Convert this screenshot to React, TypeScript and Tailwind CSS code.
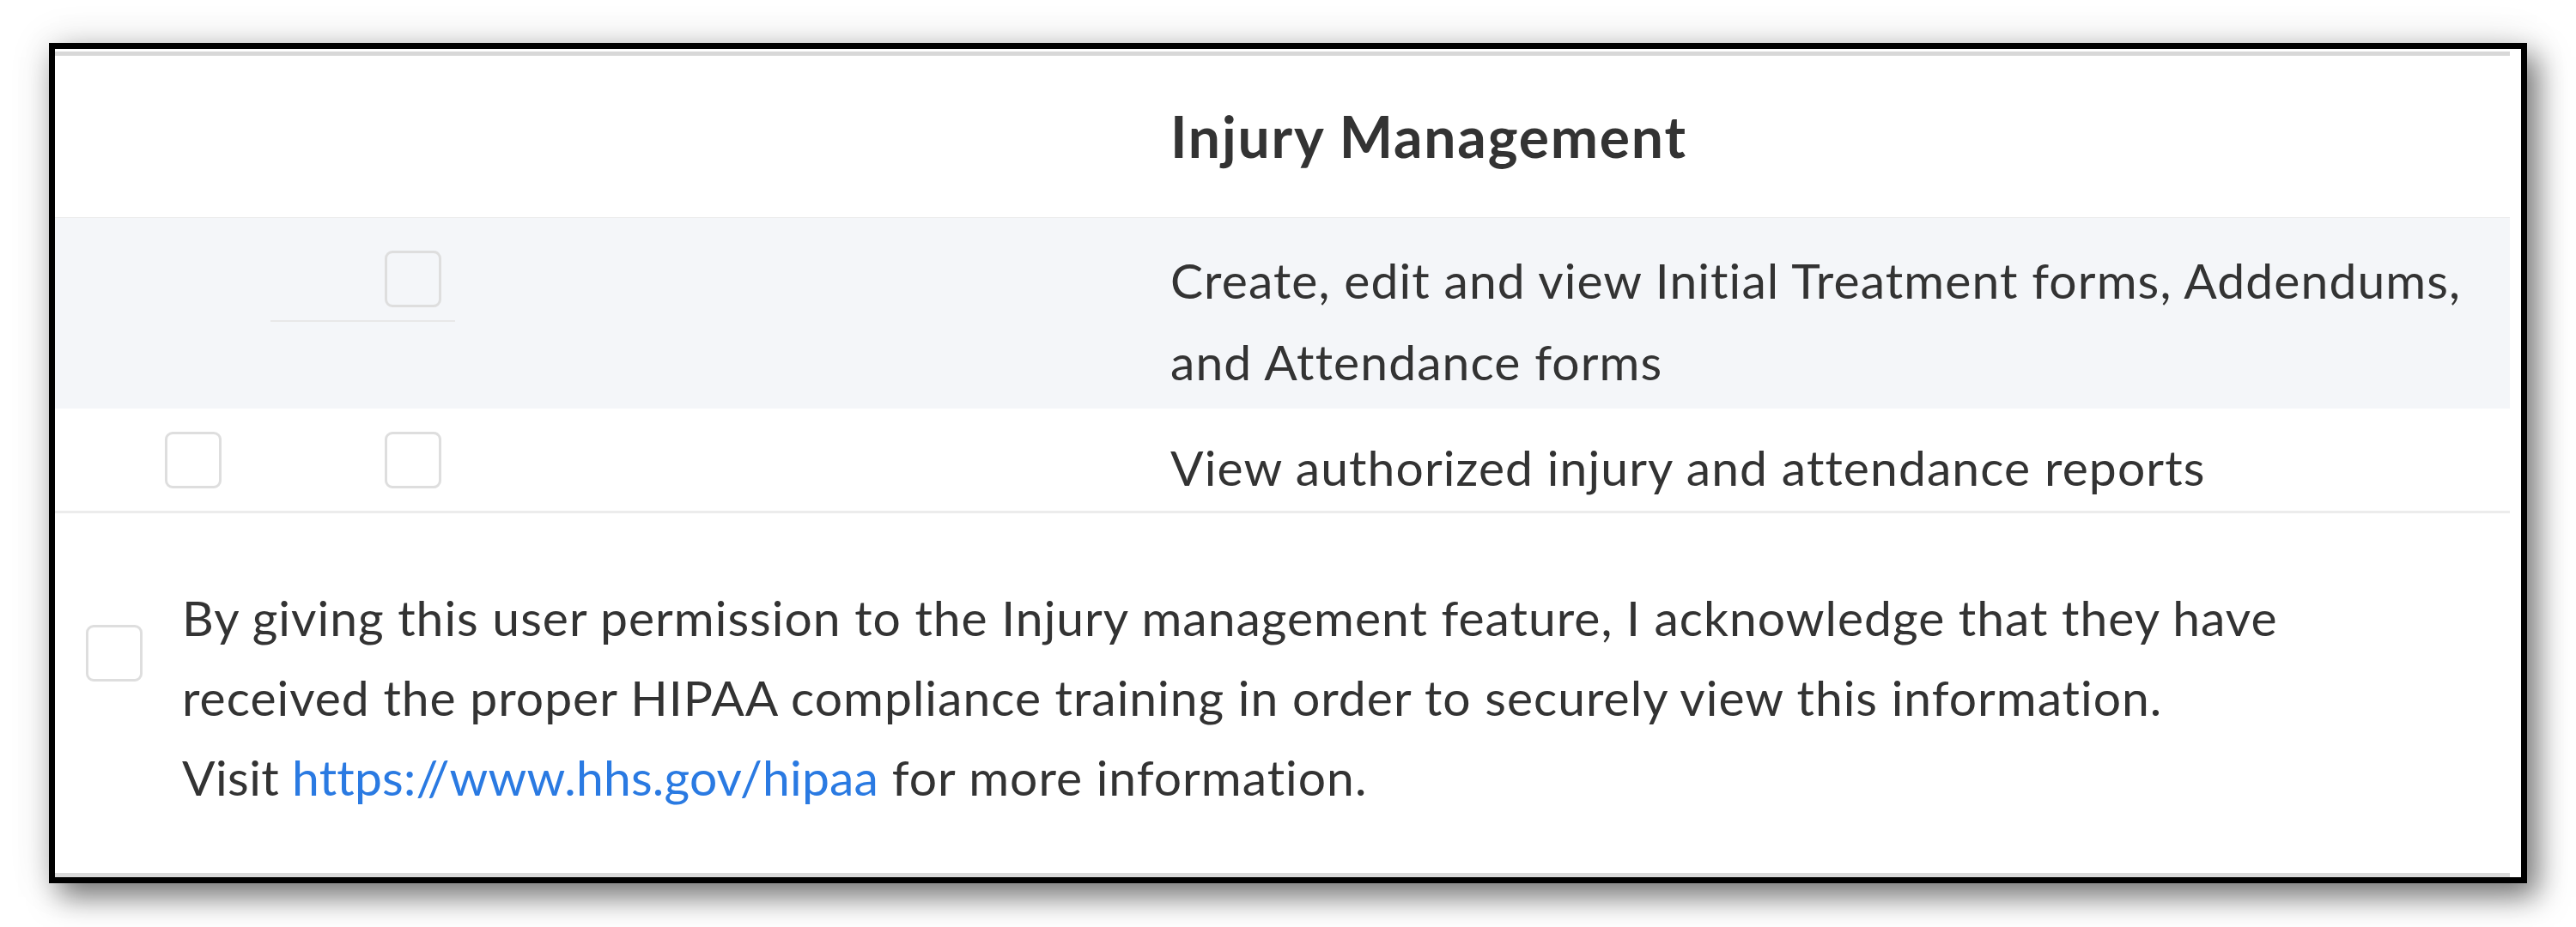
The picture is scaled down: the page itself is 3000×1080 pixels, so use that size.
const font = "font-['Lato','Liberation_Sans',sans-serif] [font-variant-ligatures:none]";

function Box({ className = "" }: { className?: string }) {
    return <div className={`h-[66px] w-[66px] rounded-[9px] border-[3px] border-[#dedede] ${className}`} />;
}

function App() {
    return (
        <div className={`h-[1080px] w-[3000px] bg-white pl-[57px] pt-[50px] ${font} text-[#333333]`}>
            <div className="flex h-[979px] w-[2886px] flex-col border-[7px] border-black bg-white shadow-[12px_16px_32px_rgba(0,0,0,0.5),0_0_44px_rgba(0,0,0,0.13)]">
                <div className="mt-[3px] h-[5px] w-[2859px] bg-[#d8d8d8]" />

                {/* header */}
                <div className="grid h-[188px] w-[2859px] grid-cols-[1299px_1fr] items-center">
                    <div />
                    <h2 className="text-[66px] font-bold leading-none tracking-[1.8px]">Injury Management</h2>
                </div>

                {/* row 1 */}
                <div className="grid h-[223px] w-[2859px] grid-cols-[251px_215px_833px_1fr] border-t border-[#ebebeb] bg-[#f4f6f9]">
                    <div />
                    <div className="flex flex-col self-start pl-[133px] pt-[38px]">
                        <Box />
                        <div className="-ml-[133px] mt-[15px] h-[2px] bg-[#e8e8e8]" />
                    </div>
                    <div />
                    <p className="mt-[25px] self-start whitespace-nowrap text-[57px] leading-[95px] tracking-[1.1px]">
                        Create, edit and view Initial Treatment forms, Addendums,
                        <br />
                        and Attendance forms
                    </p>
                </div>

                {/* row 2 */}
                <div className="grid h-[122px] w-[2859px] grid-cols-[251px_215px_833px_1fr] items-center border-b-[3px] border-[#ececec]">
                    <div className="pl-[128px]">
                        <Box />
                    </div>
                    <div className="pl-[133px]">
                        <Box />
                    </div>
                    <div />
                    <p className="mt-[21px] self-start whitespace-nowrap text-[57px] leading-[95px] tracking-[1.1px]">
                        View authorized injury and attendance reports
                    </p>
                </div>

                {/* acknowledgement */}
                <div className="flex flex-1 items-start pl-[36px] pt-[75px]">
                    <Box className="mt-[55px] shrink-0" />
                    <p className="ml-[46px] text-[57px] leading-[93px] tracking-[1px]">
                        By giving this user permission to the Injury management feature, I acknowledge that they have
                        <br />
                        received the proper HIPAA compliance training in order to securely view this information.
                        <br />
                        <span className="tracking-[0.4px]">Visit </span>
                        <a href="#" className="tracking-[0.2px] text-[#2a7ae2]">
                            https://www.hhs.gov/hipaa
                        </a>{" "}
                        for more information.
                    </p>
                </div>

                <div className="h-[5px] w-[2859px] bg-[#dadada]" />
            </div>
        </div>
    );
}

export default App;
